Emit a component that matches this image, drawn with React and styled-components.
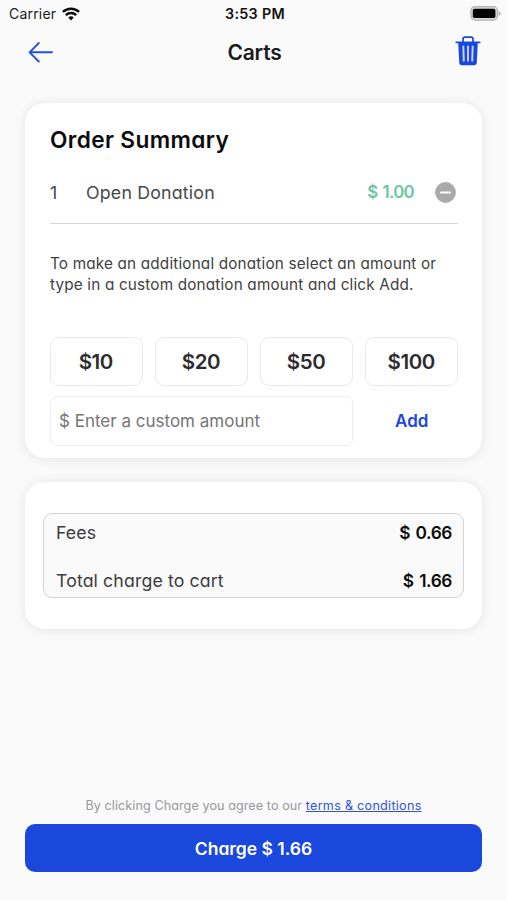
import React, { useState } from "react";
import styled, { createGlobalStyle } from "styled-components";

const GlobalStyle = createGlobalStyle`
  *{
    box-sizing: border-box;
    margin: 0;
    padding: 0;
  }
  body{
    background: #fafafa;
    font-family: Inter, "Liberation Sans", sans-serif;
  }
  button, input{
    font-family: inherit;
    border: none;
    background: none;
  }
  button{
    cursor: pointer;
  }
`;
const Screen = styled.div`
  width: 507px;
  height: 900px;
  display: flex;
  flex-flow: column;
  overflow: hidden;
  background: #fafafa;
`;
const StatusBar = styled.div`
  height: 28px;
  padding: 0 6px 1px 9px;
  display: grid;
  grid-template-columns: 1fr auto 1fr;
  align-items: center;
  font-size: 14px;
  letter-spacing: 0.2px;
  color: #1a1a1a;
`;
const Carrier = styled.div`
  display: flex;
  align-items: center;
  gap: 6px;
`;
const Clock = styled.div`
  font-weight: 600;
  font-size: 14.3px;
  letter-spacing: 0.3px;
  color: #111111;
`;
const Battery = styled.div`
  display: flex;
  justify-content: flex-end;
`;
const Header = styled.header`
  height: 75px;
  padding: 0 26px 27px 28px;
  display: grid;
  grid-template-columns: 1fr auto 1fr;
  align-items: center;
`;
const Title = styled.h1`
  font-weight: 600;
  font-size: 21px;
  letter-spacing: -0.2px;
  color: #1b1b1d;
`;
const IconButton = styled.button`
  padding-bottom: ${({$end}) => $end ? "2px" : "0"};
  display: flex;
  justify-self: ${({$end}) => $end ? "end" : "start"};
`;
const Cards = styled.main`
  padding: 0 25px;
  display: flex;
  flex-flow: column;
  gap: 24px;
`;
const Card = styled.section`
  height: ${({$height}) => $height};
  padding: ${({$padding}) => $padding};
  background: #ffffff;
  border-radius: 20px;
  box-shadow: 0 1px 12px rgba(0, 0, 0, 0.09);
  font-feature-settings: "cv11";
`;
const CardTitle = styled.h2`
  height: 28px;
  line-height: 28px;
  font-weight: 600;
  font-size: 22.7px;
  letter-spacing: 0.35px;
  color: #0c0c0c;
`;
const OrderRow = styled.div`
  height: 70px;
  padding: 7px 2px 0 0;
  display: grid;
  grid-template-columns: 36px 1fr auto 42px;
  align-items: center;
  border-bottom: 1px solid #d6d6d6;
  font-size: 17.8px;
  letter-spacing: 0.18px;
  color: #48484a;
`;
const Price = styled.span`
  font-weight: 600;
  font-size: 16.8px;
  letter-spacing: -0.65px;
  word-spacing: 1.5px;
  color: #6cc5a3;
`;
const RemoveButton = styled.button`
  display: flex;
  justify-self: end;
`;
const Hint = styled.p`
  margin-top: 30px;
  line-height: 20.5px;
  font-size: 15.3px;
  letter-spacing: 0.17px;
  color: #3f3f41;
`;
const Amounts = styled.div`
  margin-top: 42px;
  display: grid;
  grid-template-columns: repeat(4, 1fr);
  gap: 10px 12.5px;
`;
const Amount = styled.button`
  height: 49px;
  padding-right: 1px;
  border: 1px solid #e9e9eb;
  border-radius: 9px;
  font-weight: 600;
  font-size: 20.5px;
  letter-spacing: -0.4px;
  font-feature-settings: inherit;
  color: #2c2c2e;
`;
const CustomAmount = styled.input`
  height: 50px;
  grid-column: span 3;
  padding: 0 8px;
  border: 1px solid #ececee;
  border-radius: 7px;
  font-size: 17px;
  color: #2c2c2e;
  outline: none;
  &::placeholder{
    color: #757577;
  }
`;
const AddButton = styled.button`
  font-weight: 600;
  font-size: 17px;
  color: #1b45dc;
`;
const Totals = styled.div`
  height: 85px;
  padding: 5px 11px 4px 12px;
  display: flex;
  flex-flow: column;
  justify-content: space-between;
  background: #fafafa;
  border: 1px solid #d4d4d6;
  border-radius: 9px;
`;
const TotalRow = styled.div`
  height: 26px;
  display: flex;
  align-items: center;
  justify-content: space-between;
  font-size: 17.7px;
  letter-spacing: 0.13px;
  color: #3c3c3e;
`;
const TotalValue = styled.span`
  font-weight: 600;
  font-size: 17.3px;
  letter-spacing: -0.4px;
  word-spacing: 1.5px;
  color: #0c0c0c;
`;
const Footer = styled.footer`
  margin-top: auto;
  padding: 0 25px 28px;
  font-feature-settings: "cv11";
`;
const Terms = styled.p`
  height: 18px;
  margin-bottom: 9px;
  line-height: 18px;
  text-align: center;
  font-size: 12.6px;
  letter-spacing: 0.08px;
  color: #98989a;
`;
const TermsLink = styled.a`
  letter-spacing: 0.27px;
  color: #2f55d8;
  text-decoration: underline;
`;
const ChargeButton = styled.button`
  width: 100%;
  height: 48px;
  border-radius: 10px;
  background: #1a48dd;
  font-weight: 600;
  font-size: 17.5px;
  font-feature-settings: inherit;
  color: #ffffff;
`;

function WifiIcon() {
  return(
    <svg width="18" height="14" viewBox="0 0 18 14" fill="none" stroke="#0a0a0a">
      <path d="M0.9 4.900a11.700 11.700 0 0 1 16.200 0" strokeWidth="2.500"/>
      <path d="M3.800 8.100a7.500 7.500 0 0 1 10.400 0" strokeWidth="2.300"/>
      <path d="M6.300 10.600a4 4 0 0 1 5.400 0L9 13.600z" fill="#0a0a0a" stroke="none"/>
    </svg>
  );
}

function BatteryIcon() {
  return(
    <svg width="31" height="15" viewBox="0 0 31 15">
      <rect x="0.9" y="0.7" width="26.600" height="13.400" rx="4" fill="#d9d9d6" stroke="#b3b3b0" strokeWidth="1.200"/>
      <rect x="2.800" y="2.700" width="22.600" height="9.400" rx="1.800" fill="#000000"/>
      <path d="M28.600 5v4.800c1.200-.4 2-1.300 2-2.400S29.800 5.400 28.600 5z" fill="#b3b3b0"/>
    </svg>
  );
}

function BackIcon() {
  return(
    <svg width="26" height="22" viewBox="0 0 26 22" fill="none" stroke="#2450dc" strokeWidth="1.900" strokeLinecap="round" strokeLinejoin="round">
      <path d="M24 11.300H1.600M10.800 2L1.600 11.300l9.200 9.200"/>
    </svg>
  );
}

function TrashIcon() {
  return(
    <svg width="26" height="30" viewBox="0 0 26 30" fill="none" stroke="#1a48dd">
      <path d="M8 6V3.200C8 2 8.800 1.200 10 1.200h6c1.200 0 2 .8 2 2V6" strokeWidth="1.700"/>
      <path d="M1.300 6.300h23.400" strokeWidth="1.800" strokeLinecap="round"/>
      <path d="M3.200 6.300h19.600l-1 20.500c-.1 1.500-1 2.400-2.500 2.400H6.700c-1.500 0-2.400-.9-2.500-2.400z" fill="#1a48dd" stroke="none"/>
      <path d="M8.300 9.800l.5 15.600M13 9.800v15.600M17.700 9.800l-.5 15.600" stroke="#c9d5fa" strokeWidth="1.900"/>
    </svg>
  );
}

function MinusIcon() {
  return(
    <svg width="21" height="21" viewBox="0 0 21 21">
      <circle cx="10.500" cy="10.500" r="10.400" fill="#aaaaaa"/>
      <path d="M6 10.500h9" stroke="#ffffff" strokeWidth="1.900" strokeLinecap="round"/>
    </svg>
  );
}

const presets = [10, 20, 50, 100];

function App() {
  const [custom, setCustom] = useState("");

  return(
    <Screen>
      <GlobalStyle/>
      <StatusBar>
        <Carrier>Carrier<WifiIcon/></Carrier>
        <Clock>3:53 PM</Clock>
        <Battery><BatteryIcon/></Battery>
      </StatusBar>
      <Header>
        <IconButton aria-label="Back"><BackIcon/></IconButton>
        <Title>Carts</Title>
        <IconButton $end aria-label="Empty cart"><TrashIcon/></IconButton>
      </Header>
      <Cards>
        <Card $height="355px" $padding="23px 24px 0 25px">
          <CardTitle>Order Summary</CardTitle>
          <OrderRow>
            <span>1</span>
            <span>Open Donation</span>
            <Price>$ 1.00</Price>
            <RemoveButton aria-label="Remove"><MinusIcon/></RemoveButton>
          </OrderRow>
          <Hint>To make an additional donation select an amount or<br/>type in a custom donation amount and click Add.</Hint>
          <Amounts>
            {presets.map((value) => <Amount key={value}>{`$${value}`}</Amount>)}
            <CustomAmount placeholder="$ Enter a custom amount" value={custom} onChange={(e) => setCustom(e.target.value)}/>
            <AddButton>Add</AddButton>
          </Amounts>
        </Card>
        <Card $height="147px" $padding="31px 18px">
          <Totals>
            <TotalRow>Fees<TotalValue>$ 0.66</TotalValue></TotalRow>
            <TotalRow>Total charge to cart<TotalValue>$ 1.66</TotalValue></TotalRow>
          </Totals>
        </Card>
      </Cards>
      <Footer>
        <Terms>By clicking Charge you agree to our <TermsLink href="#">terms &amp; conditions</TermsLink></Terms>
        <ChargeButton>Charge $ 1.66</ChargeButton>
      </Footer>
    </Screen>
  );
}

export default App;
